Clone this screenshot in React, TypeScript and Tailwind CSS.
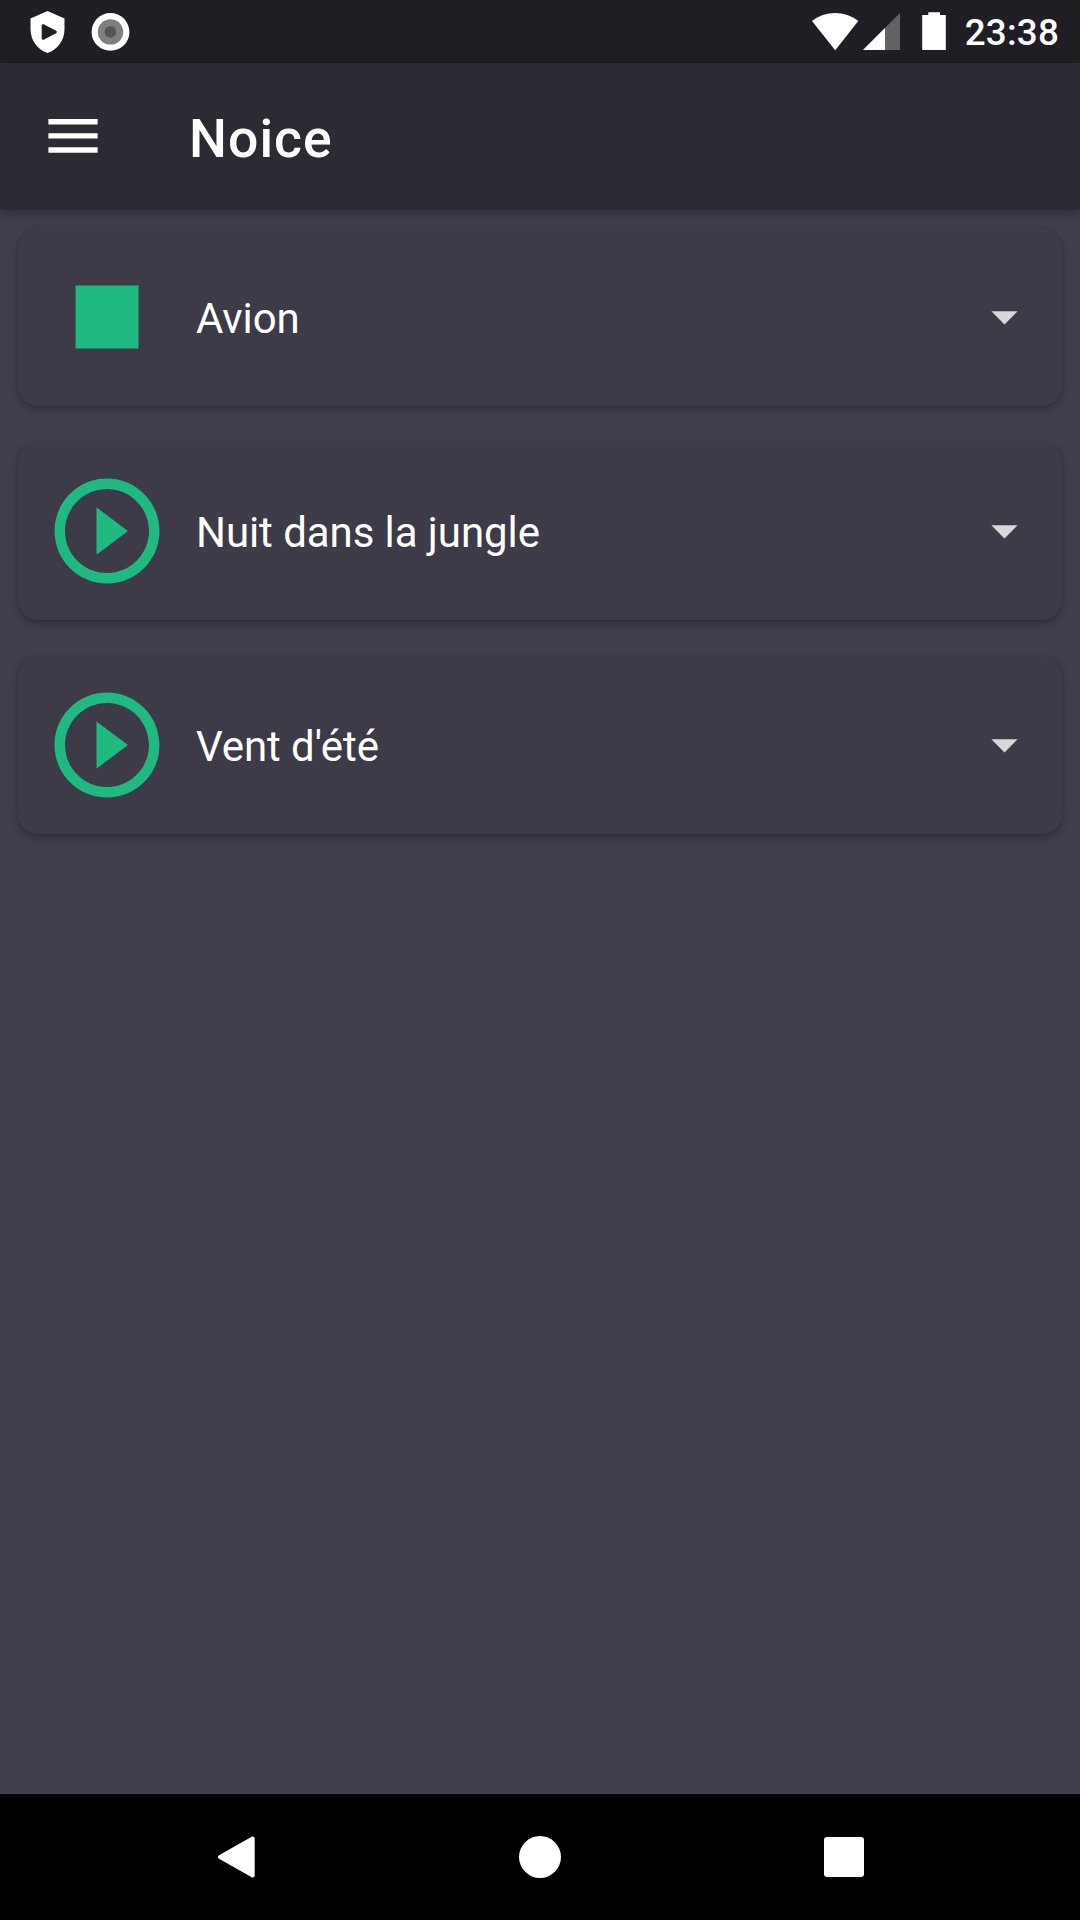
const sounds = [
  { name: "Avion", playing: true },
  { name: "Nuit dans la jungle", playing: false },
  { name: "Vent d'été", playing: false },
];

function StatusBar() {
  return (
    <div className="flex h-[63px] shrink-0 items-center justify-between bg-[#1f1e24] pr-[21px] pl-[30px]">
      <div className="flex items-center gap-[26px]">
        <svg className="h-[42px] w-[35px]" viewBox="0 0 35 42" fill="none">
          <path d="M17.5 0 L34.5 7.5 V18 C34.5 29 28 38.5 17.5 42 C7 38.5 0.5 29 0.5 18 V7.5 Z" fill="#fff" />
          <path d="M13 14.5 L25.5 21 L13 27.5 Z" fill="#1f1e24" stroke="#1f1e24" strokeWidth="2.6" strokeLinejoin="round" />
        </svg>
        <svg className="h-[38px] w-[39px]" viewBox="0 0 39 38">
          <circle cx="19.5" cy="18.9" r="18.9" fill="#fff" />
          <circle cx="19.5" cy="18.9" r="12.7" fill="#7e7e81" />
          <circle cx="19.5" cy="18.9" r="5.8" fill="#545457" />
        </svg>
      </div>
      <div className="flex items-center">
        <svg className="h-[63px] w-[47px]" viewBox="0 0 47 63">
          <path d="M0 21 C13 10.3 33.2 10.3 46.3 21 L23.2 50.2 Z" fill="#fff" />
        </svg>
        <svg className="ml-1 h-[63px] w-[38px]" viewBox="0 0 38 63">
          <path d="M37 13 V50 H0 Z" fill="#636267" />
          <path d="M22 28 V50 H0 Z" fill="#fff" />
        </svg>
        <svg className="ml-[21px] h-[63px] w-6" viewBox="0 0 24 63">
          <path d="M6.3 12.3 H18 V15 H23.8 V50 H0.2 V15 H6.3 Z" fill="#fff" />
        </svg>
        <span className="ml-[19px] pt-1 text-[36.75px] leading-none font-medium tracking-[0.2px]">23:38</span>
      </div>
    </div>
  );
}

function AppBar() {
  return (
    <div className="z-10 flex h-[147px] shrink-0 items-center bg-[#2c2b33] pl-12 shadow-[0_4px_11px_rgba(0,0,0,0.28)]">
      <svg className="h-[50px] w-[50px]" viewBox="0 0 50 50">
        <path d="M0.4 7 H49.6 V12.4 H0.4 Z M0.4 21.2 H49.6 V26.6 H0.4 Z M0.4 35.3 H49.6 V40.7 H0.4 Z" fill="#fff" />
      </svg>
      <h1 className="ml-[91px] pt-[5px] text-[53.5px] leading-none font-medium tracking-[1.05px]">Noice</h1>
    </div>
  );
}

function SoundCard({ name, playing }: { name: string; playing: boolean }) {
  return (
    <div className="flex h-[178px] items-center rounded-[20px] bg-[#3c3b47] px-[26px] shadow-[0_4px_9px_rgba(0,0,0,0.25),0_0_3px_rgba(0,0,0,0.12)]">
      <svg className="size-[126px] shrink-0" viewBox="0 0 24 24" fill="#1fb981">
        {playing ? (
          <path d="M6 6h12v12H6z" />
        ) : (
          <path d="M10 16.5l6-4.5-6-4.5v9zM12 2C6.48 2 2 6.48 2 12s4.48 10 10 10 10-4.48 10-10S17.52 2 12 2zm0 18c-4.41 0-8-3.59-8-8s3.59-8 8-8 8 3.59 8 8-3.59 8-8 8z" />
        )}
      </svg>
      <span className="ml-[26px] grow pt-[3px] text-[42px] leading-none tracking-[-0.07px]">{name}</span>
      <svg className="mb-0.5 size-[63px] shrink-0" viewBox="0 0 24 24" fill="#d8d8da">
        <path d="M7 10l5 5 5-5z" />
      </svg>
    </div>
  );
}

function NavigationBar() {
  return (
    <div className="flex h-[126px] shrink-0 items-center justify-between bg-black pr-[216px] pl-[217px]">
      <svg className="h-[42px] w-[38px]" viewBox="0 0 38 42">
        <path d="M35.7 2.5 V39.5 L3 21 Z" fill="#fff" stroke="#fff" strokeWidth="4" strokeLinejoin="round" />
      </svg>
      <div className="size-[42px] rounded-full bg-white" />
      <div className="size-10 rounded-[3px] bg-white" />
    </div>
  );
}

export default function App() {
  return (
    <div className="flex h-[1920px] w-[1080px] flex-col overflow-hidden bg-[#413f4d] font-['Roboto',sans-serif] text-white">
      <StatusBar />
      <AppBar />
      <main className="flex grow flex-col gap-9 p-[18px]">
        {sounds.map((sound) => (
          <SoundCard key={sound.name} {...sound} />
        ))}
      </main>
      <NavigationBar />
    </div>
  );
}
